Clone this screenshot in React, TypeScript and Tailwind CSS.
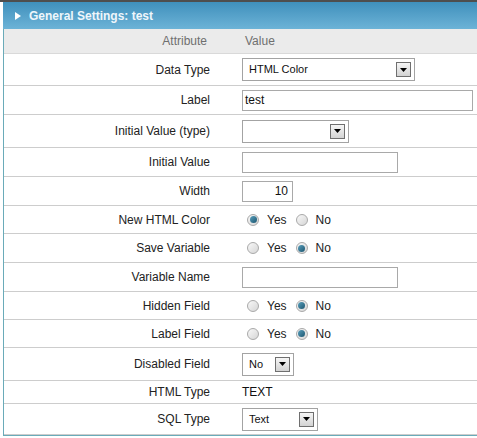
import React from "react";

type Row = {
  label: string;
  h: string;
  kind: "select" | "input" | "radio" | "text";
  value?: string;
  w?: string;
  yes?: boolean;
  right?: boolean;
};

const rows: Row[] = [
  { label: "Data Type", h: "h-[32px]", kind: "select", value: "HTML Color", w: "w-[173px]" },
  { label: "Label", h: "h-[29px]", kind: "input", value: "test", w: "w-[231px]" },
  { label: "Initial Value (type)", h: "h-[33px]", kind: "select", value: "", w: "w-[107px]" },
  { label: "Initial Value", h: "h-[29px]", kind: "input", value: "", w: "w-[156px]" },
  { label: "Width", h: "h-[29px]", kind: "input", value: "10", w: "w-[51px]", right: true },
  { label: "New HTML Color", h: "h-[28px]", kind: "radio", yes: true },
  { label: "Save Variable", h: "h-[29px]", kind: "radio", yes: false },
  { label: "Variable Name", h: "h-[29px]", kind: "input", value: "", w: "w-[156px]" },
  { label: "Hidden Field", h: "h-[28px]", kind: "radio", yes: false },
  { label: "Label Field", h: "h-[28px]", kind: "radio", yes: false },
  { label: "Disabled Field", h: "h-[33px]", kind: "select", value: "No", w: "w-[52px]" },
  { label: "HTML Type", h: "h-[23px]", kind: "text", value: "TEXT" },
  { label: "SQL Type", h: "h-[31px]", kind: "select", value: "Text", w: "w-[76px]" },
];

function Select({ value, w }: { value: string; w: string }) {
  return (
    <div className={`flex h-[23px] items-center border border-[#a3a3a3] bg-white pl-[6px] text-[11px] text-[#111] ${w}`}>
      <span>{value}</span>
      <span className="mr-[3px] ml-auto flex h-[15px] w-[15px] items-center justify-center border border-[#6f6f6f] bg-gradient-to-b from-[#f6f6f6] to-[#d3d3d3]">
        <svg width="7" height="4" viewBox="0 0 7 4">
          <polygon points="0,0 7,0 3.5,4" fill="#000" />
        </svg>
      </span>
    </div>
  );
}

function Radio({ on }: { on: boolean }) {
  return (
    <span className="flex h-[12px] w-[12px] items-center justify-center rounded-full border border-[#a9a9a9] bg-gradient-to-br from-[#f8f8f8] to-[#d6d6d6]">
      {on && (
        <span className="h-[7px] w-[7px] rounded-full bg-gradient-to-br from-[#5aa0bd] to-[#1b5670]" />
      )}
    </span>
  );
}

export default function App() {
  return (
    <div className="h-[438px] w-[477px] overflow-hidden bg-white font-['Liberation_Sans',Arial,sans-serif] text-[12px]">
      <div className="h-[2px] bg-[#4e4e4e]" />
      <div className="ml-[3px] flex h-[27px] w-[480px] items-center bg-gradient-to-b from-[#3f90bc] to-[#6cb3d7] pl-[12px]">
        <svg width="6" height="8" viewBox="0 0 6 8">
          <polygon points="0,0 6,4 0,8" fill="#fff" />
        </svg>
        <span className="ml-[8px] font-bold text-[#eef6fb]">General Settings: test</span>
      </div>
      <div className="ml-[3px] w-[480px] border-b border-l border-[#6aabb9]">
        <div className="flex h-[25px] items-center border-b border-[#d9d9d9] bg-[#ebebeb] text-[#6f6f6f]">
          <div className="w-[238px] pr-[35px] text-right">Attribute</div>
          <div className="pl-[3px]">Value</div>
        </div>
        {rows.map((r) => (
          <div key={r.label} className={`flex items-center border-b border-[#cdcdcd] ${r.h}`}>
            <div className="w-[238px] pr-[32px] text-right text-[#222]">{r.label}</div>
            <div className="flex items-center">
              {r.kind === "select" && <Select value={r.value ?? ""} w={r.w ?? ""} />}
              {r.kind === "input" && (
                <div
                  className={`flex h-[21px] items-center border border-[#a9a9a9] bg-white px-[2px] text-[#111] ${r.w} ${
                    r.right ? "justify-end pr-[4px]" : ""
                  }`}
                >
                  {r.value}
                </div>
              )}
              {r.kind === "radio" && (
                <div className="ml-[5px] flex items-center text-[#222]">
                  <Radio on={!!r.yes} />
                  <span className="ml-[8px]">Yes</span>
                  <span className="ml-[9px]">
                    <Radio on={!r.yes} />
                  </span>
                  <span className="ml-[8px]">No</span>
                </div>
              )}
              {r.kind === "text" && <div className="text-[#111]">{r.value}</div>}
            </div>
          </div>
        ))}
      </div>
    </div>
  );
}
